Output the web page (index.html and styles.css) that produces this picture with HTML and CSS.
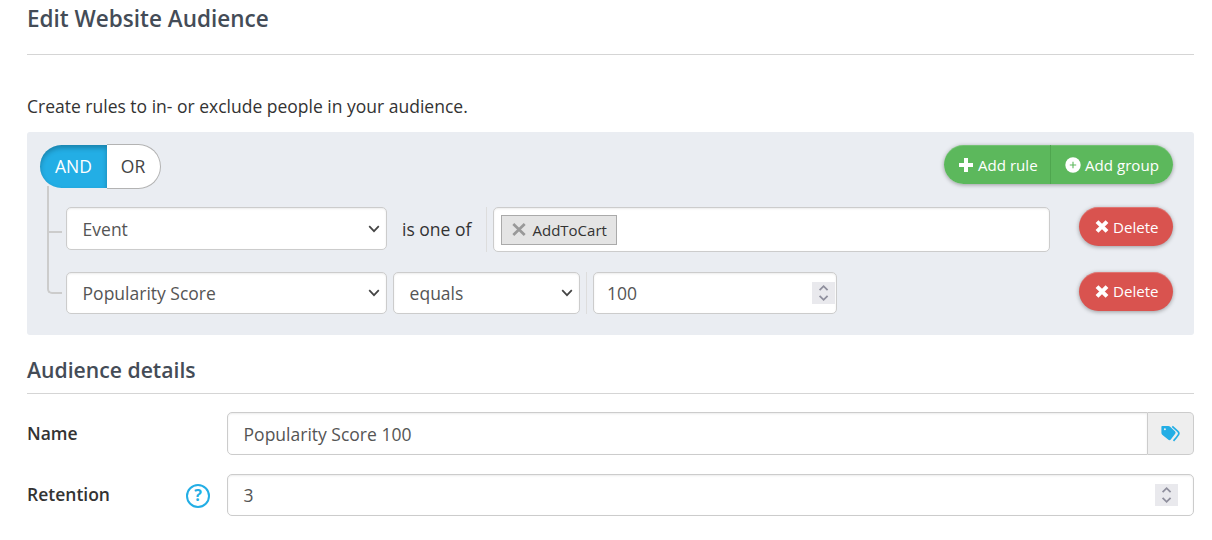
FILE: index.html
```html
<!DOCTYPE html>
<html lang="en">
<head>
    <meta charset="UTF-8">
    <meta name="viewport" content="width=device-width, initial-scale=1.0">
    <title>Edit Website Audience</title>
    <link rel="stylesheet" href="styles.css">
</head>
<body>
<div class="main">
    <h1 class="page-title">Edit Website Audience</h1>
    <p class="intro">Create rules to in- or exclude people in your audience.</p>

    <div class="rules-group">
        <div class="rules-header">
            <div class="conditions">
                <span class="condition active">AND</span>
                <span class="condition">OR</span>
            </div>
            <div class="group-actions">
                <a class="btn btn-success btn-rule">
                    <svg width="14" height="14" viewBox="0 0 14 14"><path d="M5 0h4v5h5v4H9v5H5V9H0V5h5z" fill="#fff"/></svg>
                    <span>Add rule</span>
                </a>
                <a class="btn btn-success btn-group">
                    <svg width="16" height="16" viewBox="0 0 16 16"><circle cx="8" cy="8" r="7.7" fill="#fff"/><path d="M8 4.8v6.4M4.8 8h6.4" stroke="#5cb85c" stroke-width="1.1"/></svg>
                    <span>Add group</span>
                </a>
            </div>
        </div>
        <ul class="rules-list">
            <li class="rule">
                <div class="control select filter">
                    <span>Event</span>
                    <svg width="12" height="8" viewBox="0 0 12 8"><path d="M1.2 1.2L6 6.2l4.8-5" fill="none" stroke="#444" stroke-width="1.7"/></svg>
                </div>
                <span class="operator-text">is one of</span>
                <div class="value">
                    <div class="control tags">
                        <span class="tag">
                            <svg width="14" height="13" viewBox="0 0 14 13"><path d="M1.3 1L12.7 12M12.7 1L1.3 12" stroke="#999" stroke-width="2.7"/></svg>
                            AddToCart
                        </span>
                    </div>
                </div>
                <a class="btn btn-danger">
                    <svg width="14" height="13" viewBox="0 0 14 13"><path d="M2 1.6L12 11.4M12 1.6L2 11.4" stroke="#fff" stroke-width="4"/></svg>
                    <span>Delete</span>
                </a>
            </li>
            <li class="rule">
                <div class="control select filter">
                    <span>Popularity Score</span>
                    <svg width="12" height="8" viewBox="0 0 12 8"><path d="M1.2 1.2L6 6.2l4.8-5" fill="none" stroke="#444" stroke-width="1.7"/></svg>
                </div>
                <div class="control select operator">
                    <span>equals</span>
                    <svg width="12" height="8" viewBox="0 0 12 8"><path d="M1.2 1.2L6 6.2l4.8-5" fill="none" stroke="#444" stroke-width="1.7"/></svg>
                </div>
                <div class="value">
                    <div class="control number score">
                        <span>100</span>
                        <span class="spinner">
                            <svg width="23" height="22" viewBox="0 0 23 22"><path d="M7.6 8.2l4-4 4 4M7.6 13.8l4 4 4-4" fill="none" stroke="#8f8f9d" stroke-width="1.8"/></svg>
                        </span>
                    </div>
                </div>
                <a class="btn btn-danger">
                    <svg width="14" height="13" viewBox="0 0 14 13"><path d="M2 1.6L12 11.4M12 1.6L2 11.4" stroke="#fff" stroke-width="4"/></svg>
                    <span>Delete</span>
                </a>
            </li>
        </ul>
    </div>

    <h2 class="section-title">Audience details</h2>
    <div class="form-row">
        <label class="form-label">Name</label>
        <div class="input-group">
            <div class="control">Popularity Score 100</div>
            <span class="addon">
                <svg width="19" height="17" viewBox="0 0 19 17"><path fill="#23aee5" fill-rule="evenodd" d="M1.4 1h6c.6 0 1 .2 1.500.6l5 4.700c.9.9.9 1.900.1 2.800l-4.200 5.400c-.8.900-1.800 1-2.700.1L1.200 9.800C.6 9.200.4 8.700.4 8.100V2C.4 1.300.8 1 1.400 1zM3.900 3.200a1 1 0 1 0 0 2 1 1 0 0 0 0-2z"/><path d="M11.300 1.300l5.500 5c1.300 1.200 1.400 2.300.5 3.600-1.300 2.100-2.800 3.900-4.800 6" fill="none" stroke="#23aee5" stroke-width="1.7"/></svg>
            </span>
        </div>
    </div>
    <div class="form-row">
        <label class="form-label retention-label">Retention</label>
        <span class="help">?</span>
        <div class="control number retention">
            <span>3</span>
            <span class="spinner">
                <svg width="23" height="22" viewBox="0 0 23 22"><path d="M7.6 8.2l4-4 4 4M7.6 13.8l4 4 4-4" fill="none" stroke="#8f8f9d" stroke-width="1.8"/></svg>
            </span>
        </div>
    </div>
</div>
</body>
</html>
```

FILE: styles.css
```css
*{
    margin: 0;
    padding: 0;
    box-sizing: border-box;
}
body{
    background: #fff;
    color: #333;
    font: 17.5px/24px "Open Sans", sans-serif;
}
svg{
    display: block;
    flex: none;
}
.main{
    padding: 0 18px 0 27px;
}
.page-title, .section-title{
    color: #444c57;
    font-weight: 600;
    border-bottom: 1px solid #d5d5d5;
}
.page-title{
    height: 55px;
    padding-top: 4px;
    font-size: 22.5px;
    line-height: 30px;
}
.intro{
    margin: 39px 0 14px;
}

/* rule builder */
.rules-group{
    height: 203px;
    padding: 12px 21px 0 13px;
    background: #eaedf2;
    border-radius: 3px;
}
.rules-header{
    display: flex;
    justify-content: space-between;
    align-items: flex-start;
    height: 45px;
}
.conditions{
    display: flex;
    align-items: center;
}
.condition{
    display: flex;
    align-items: center;
    justify-content: center;
    width: 54px;
    height: 45px;
    padding: 0 1px 2px 0;
    border: 1px solid #b3b3b3;
    border-left: 0;
    border-radius: 0 23px 23px 0;
    background: #fff;
    color: #444;
}
.condition.active{
    width: 67px;
    height: 43px;
    padding-right: 0;
    border: 0;
    border-radius: 22px 0 0 22px;
    background: #23aee5;
    color: #fff;
    box-shadow: inset 0 3px 5px rgba(0,0,0,0.25);
}
.group-actions{
    display: flex;
    margin-top: 1px;
    border-radius: 20px;
    box-shadow: 0 1px 4px rgba(0,0,0,0.35);
}
.btn{
    display: flex;
    align-items: center;
    height: 39px;
    padding: 0 15px;
    gap: 5px;
    border-radius: 20px;
    color: #fff;
    font-size: 15.1px;
    white-space: nowrap;
}
.btn-success{
    background: #5cb85c;
    box-shadow: inset 0 1px 0 rgba(255,255,255,0.15);
}
.btn-rule{
    width: 106px;
    padding-right: 0;
    border-radius: 20px 0 0 20px;
}
.btn-group{
    width: 123px;
    padding-right: 0;
    padding-left: 14px;
    gap: 4px;
    border-left: 1px solid #4fa64f;
    border-radius: 0 20px 20px 0;
}
.btn-danger{
    width: 94px;
    margin-left: auto;
    padding-left: 16px;
    gap: 4px;
    background: #d9534f;
    box-shadow: 0 1px 4px rgba(0,0,0,0.35), inset 0 1px 0 rgba(255,255,255,0.2);
}
.rules-list{
    display: flex;
    flex-direction: column;
    gap: 20px;
    padding: 18px 0 0 26px;
    list-style: none;
}
.rule{
    display: flex;
    align-items: flex-start;
    position: relative;
}
/* tree lines between the condition switch and the rules */
.rule::before{
    content: "";
    position: absolute;
    left: -19px;
    top: -21px;
    width: 13px;
    height: 45px;
    border: solid #ccc;
    border-width: 0 0 2px 2px;
}
.rule:last-child::before{
    top: -42px;
    height: 62px;
    border-radius: 0 0 0 5px;
}
.control{
    display: flex;
    align-items: center;
    height: 43px;
    padding: 1px 15.6px 0;
    border: 1px solid #ccc;
    border-radius: 5px;
    background: #fff;
    color: #555;
    box-shadow: inset 0 1px 2px rgba(0,0,0,0.08);
}
.select{
    justify-content: space-between;
    padding-right: 6px;
}
.filter{
    width: 321px;
}
.operator{
    width: 187px;
    margin-left: 6px;
}
.rule:last-child .control{
    height: 42px;
    padding-top: 0;
}
.rule:last-child .btn{
    padding-bottom: 1px;
}
.operator-text{
    width: 84px;
    margin-left: 15px;
    line-height: 44px;
}
.value{
    padding-left: 6px;
    border-left: 1px solid #ddd;
}
.rule:last-child .value{
    margin-left: 6px;
}
.tags{
    width: 557px;
    height: 45px;
    padding: 0 7px;
}
.tag{
    display: flex;
    align-items: center;
    gap: 6.5px;
    width: 116px;
    height: 30px;
    padding-left: 10px;
    border: 1px solid #aaa;
    background: #e4e4e4;
    color: #333;
    font-size: 15px;
}
.number{
    justify-content: space-between;
}
.score{
    width: 244px;
    padding: 0 1px 0 13px;
}
.spinner{
    background: #e9e9ed;
}

/* details form */
.section-title{
    height: 59px;
    margin-bottom: 18px;
    padding-top: 20px;
    font-size: 21.2px;
    line-height: 29px;
}
.form-row{
    display: flex;
    align-items: flex-start;
    margin-bottom: 19px;
}
.form-label{
    width: 159px;
    font-weight: 600;
    line-height: 42px;
}
.retention-label{
    line-height: 40px;
}
.input-group{
    display: flex;
    width: 967px;
    margin-left: 41px;
}
.input-group .control{
    flex: 1;
    border-radius: 5px 0 0 5px;
}
.addon{
    display: flex;
    align-items: center;
    justify-content: center;
    width: 46px;
    border: 1px solid #ccc;
    border-left: 0;
    border-radius: 0 5px 5px 0;
    background: #eee;
}
.help{
    width: 24px;
    height: 24px;
    margin: 10px 17px 0 0;
    border: 2px solid #23aee5;
    border-radius: 50%;
    color: #23aee5;
    font-size: 16px;
    font-weight: 700;
    line-height: 19px;
    text-align: center;
}
.retention{
    width: 967px;
    height: 42px;
    padding: 0 15px 0 15.6px;
}
```
